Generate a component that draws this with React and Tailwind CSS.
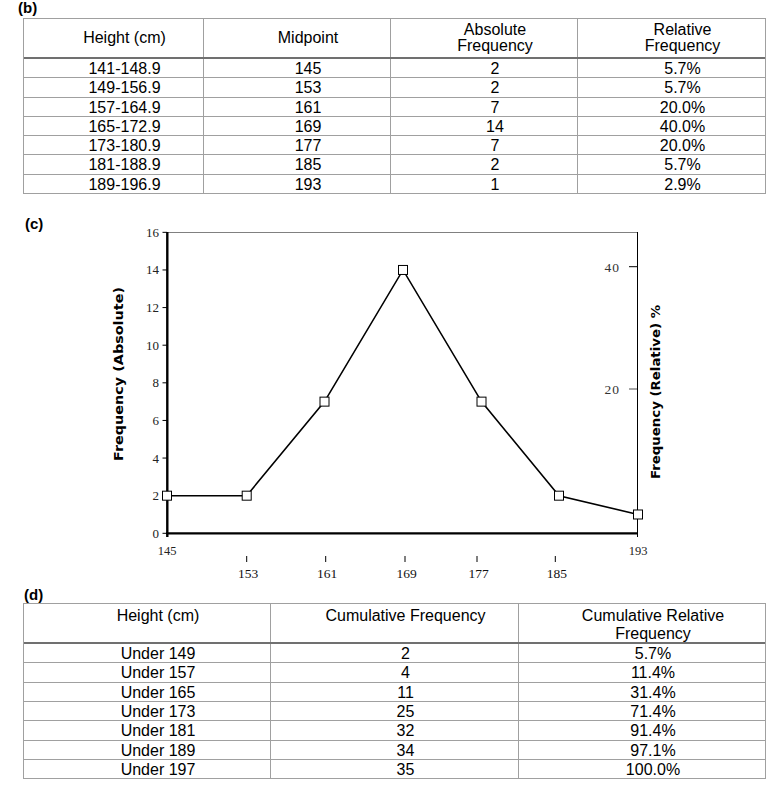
import React from 'react';

const rowsB = [
  ['141-148.9', '145', '2', '5.7%'],
  ['149-156.9', '153', '2', '5.7%'],
  ['157-164.9', '161', '7', '20.0%'],
  ['165-172.9', '169', '14', '40.0%'],
  ['173-180.9', '177', '7', '20.0%'],
  ['181-188.9', '185', '2', '5.7%'],
  ['189-196.9', '193', '1', '2.9%'],
];

const rowsD = [
  ['Under 149', '2', '5.7%'],
  ['Under 157', '4', '11.4%'],
  ['Under 165', '11', '31.4%'],
  ['Under 173', '25', '71.4%'],
  ['Under 181', '32', '91.4%'],
  ['Under 189', '34', '97.1%'],
  ['Under 197', '35', '100.0%'],
];

// chart scale (page coordinates)
const Y0 = 534.3;
const yOf = (v) => Y0 - v * 18.81;
const points = [
  [167, 2],
  [246.7, 2],
  [324.5, 7],
  [403, 14],
  [481.5, 7],
  [559, 2],
  [638, 1],
];
const xTicks = [
  [246.7, '153'],
  [325.7, '161'],
  [405, '169'],
  [477, '177'],
  [555.3, '185'],
];

const Chart = () => {
  const serif = "'Liberation Serif', 'Times New Roman', serif";
  const title = "'DejaVu Sans', 'Liberation Sans', sans-serif";
  return (
    <svg width="776" height="362" viewBox="0 226 776 362" className="block">
      {/* frame */}
      <line x1="167" y1="233.5" x2="637.5" y2="233.5" stroke="#808080" strokeWidth="1" />
      <line x1="637.5" y1="233" x2="637.5" y2="538" stroke="#000" strokeWidth="1" />
      <line x1="167.3" y1="233" x2="167.3" y2="538" stroke="#000" strokeWidth="2.4" />
      <line x1="166" y1="534.3" x2="638" y2="534.3" stroke="#000" strokeWidth="2.2" />

      {/* left scale */}
      {[0, 2, 4, 6, 8, 10, 12, 14, 16].map((v) => (
        <g key={v}>
          <line x1="162.5" y1={yOf(v)} x2="167" y2={yOf(v)} stroke="#000" strokeWidth="1" />
          <text x="159" y={yOf(v) + 4.5} textAnchor="end" fontSize="13" fontFamily={serif} fill="#222">
            {v}
          </text>
        </g>
      ))}

      {/* right scale */}
      <line x1="629" y1="267.7" x2="637" y2="267.7" stroke="#000" strokeWidth="1" />
      <text x="620" y="272.5" textAnchor="end" fontSize="13.5" letterSpacing="1" fontFamily={serif} fill="#333">
        40
      </text>
      <line x1="629" y1="390" x2="637" y2="390" stroke="#777" strokeWidth="1.3" />
      <text x="620" y="394.5" textAnchor="end" fontSize="13.5" letterSpacing="1" fontFamily={serif} fill="#333">
        20
      </text>

      {/* x labels */}
      <text x="167" y="555.5" textAnchor="middle" fontSize="12.5" fontFamily={serif} fill="#222">
        145
      </text>
      <text x="638" y="555.5" textAnchor="middle" fontSize="12.5" fontFamily={serif} fill="#222">
        193
      </text>
      {xTicks.map(([x, label]) => (
        <g key={label}>
          <line x1={x} y1="557" x2={x} y2="563" stroke="#000" strokeWidth="1" />
          <text x={x + 1.5} y="579" textAnchor="middle" fontSize="13.5" fontFamily={serif} fill="#111">
            {label}
          </text>
        </g>
      ))}

      {/* axis titles */}
      <text
        x={118 - 87}
        y={375 + 4.5}
        transform="rotate(-90 118 375)"
        fontSize="12.5"
        fontWeight="900"
        fontFamily={title}
        textLength="174"
        lengthAdjust="spacingAndGlyphs"
        fill="#000"
      >
        Frequency (Absolute)
      </text>
      <text
        x={655 - 87}
        y={393 + 4.5}
        transform="rotate(-90 655 393)"
        fontSize="12.5"
        fontWeight="900"
        fontFamily={title}
        textLength="174"
        lengthAdjust="spacingAndGlyphs"
        fill="#000"
      >
        Frequency (Relative) %
      </text>

      {/* polygon */}
      <polyline
        points={points.map(([x, v]) => `${x},${yOf(v)}`).join(' ')}
        fill="none"
        stroke="#000"
        strokeWidth="1.6"
      />
      {points.map(([x, v]) => (
        <rect key={x} x={x - 4.5} y={yOf(v) - 4.5} width="9" height="9" fill="#fff" stroke="#000" strokeWidth="1" />
      ))}
    </svg>
  );
};

const App = () => {
  return (
    <div className="w-[776px] min-h-[787px] bg-white text-black font-['Liberation_Sans',Arial,sans-serif]">
      {/* (b) */}
      <div className="h-[18px] pl-[18px] text-[15px] font-bold leading-[16px]">(b)</div>
      <div className="ml-[23px] w-[743px] border border-[#a0a0a0] text-[16px]">
        <div className="grid grid-cols-[179px_187px_187px_188px] border-b-2 border-[#707070]">
          <div className="h-[38px] flex items-center justify-center pl-[22px] text-center leading-[16px]">Height (cm)</div>
          <div className="h-[38px] flex items-center justify-center pl-[22px] text-center leading-[16px] border-l border-[#a0a0a0]">Midpoint</div>
          <div className="h-[38px] flex items-center justify-center pl-[22px] text-center leading-[16px] border-l border-[#a0a0a0]">
            Absolute
            <br />
            Frequency
          </div>
          <div className="h-[38px] flex items-center justify-center pl-[22px] text-center leading-[16px] border-l border-[#a0a0a0]">
            Relative
            <br />
            Frequency
          </div>
        </div>
        {rowsB.map((r, i) => (
          <div
            key={r[0]}
            className={`grid grid-cols-[179px_187px_187px_188px] ${i < rowsB.length - 1 ? 'border-b border-[#a0a0a0]' : ''}`}
          >
            {r.map((c, j) => (
              <div
                key={j}
                className={`h-[18.3px] pl-[22px] text-center leading-[19px] ${j > 0 ? 'border-l border-[#a0a0a0]' : ''}`}
              >
                {c}
              </div>
            ))}
          </div>
        ))}
      </div>

      {/* (c) */}
      <div className="h-[31px] pt-[22px] pl-[25px] text-[15px] font-bold leading-[16px]">(c)</div>
      <Chart />

      {/* (d) */}
      <div className="h-[16px] pl-[24px] text-[15px] font-bold leading-[15px]">(d)</div>
      <div className="ml-[23px] w-[743px] border border-[#a0a0a0] text-[16px]">
        <div className="grid grid-cols-[246px_248px_247px] border-b-2 border-[#707070]">
          <div className="h-[38px] pt-[3px] pl-[22px] text-center leading-[18px]">Height (cm)</div>
          <div className="h-[38px] pt-[3px] pl-[22px] text-center leading-[18px] border-l border-[#a0a0a0]">Cumulative Frequency</div>
          <div className="h-[38px] pt-[3px] pl-[22px] text-center leading-[18px] border-l border-[#a0a0a0]">
            Cumulative Relative
            <br />
            Frequency
          </div>
        </div>
        {rowsD.map((r, i) => (
          <div
            key={r[0]}
            className={`grid grid-cols-[246px_248px_247px] ${i < rowsD.length - 1 ? 'border-b border-[#a0a0a0]' : ''}`}
          >
            {r.map((c, j) => (
              <div
                key={j}
                className={`h-[18.3px] pl-[22px] text-center leading-[19px] ${j > 0 ? 'border-l border-[#a0a0a0]' : ''}`}
              >
                {c}
              </div>
            ))}
          </div>
        ))}
      </div>
    </div>
  );
};

export default App;
